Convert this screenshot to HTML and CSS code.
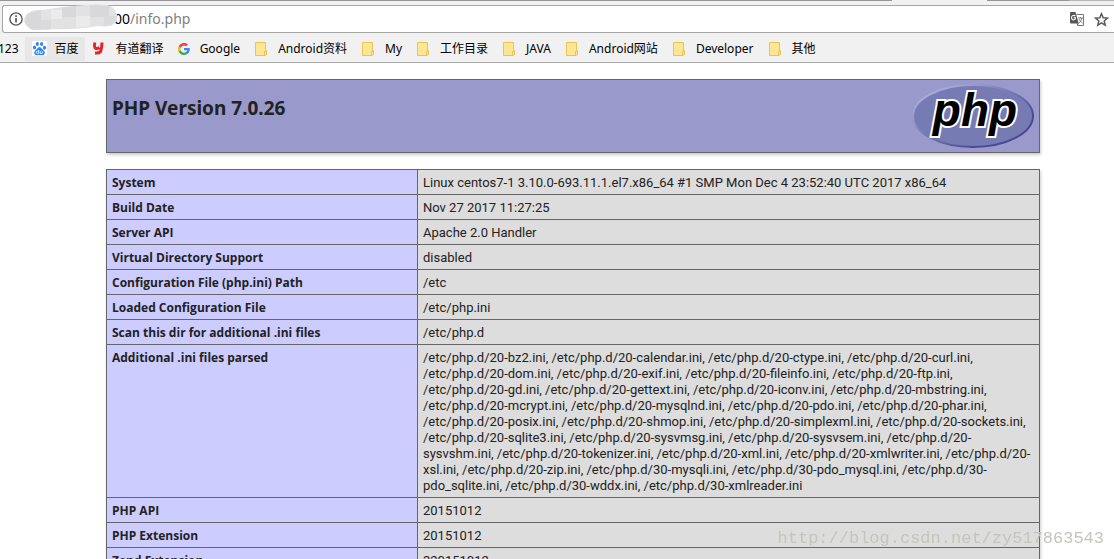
FILE: index.html
```html
<!DOCTYPE html>
<html lang="zh-CN">
<head>
<meta charset="utf-8">
<title>phpinfo()</title>
<link rel="stylesheet" href="styles.css">
</head>
<body>
<svg class="defs" width="0" height="0" aria-hidden="true">
  <symbol id="folder" viewBox="0 0 12 14">
    <path d="M.5.5h10v8h1v4h-1v1H.5z" fill="#ffe694" stroke="#e9c54e"/>
    <path d="M9.5 13V9.5h2v3.5" fill="#ffe694" stroke="#e9c54e"/>
  </symbol>
</svg>
<header class="browser">
  <div class="tab-strip"><span class="tab-active"></span><span class="tab-edge"></span></div>
  <div class="address">
    <svg class="info" viewBox="0 0 14 14" aria-hidden="true"><circle cx="7" cy="7" r="6.1" fill="none" stroke="#5a5a5a" stroke-width="1.4"/><path d="M6.2 6h1.7v4.5H6.2zM6.2 3.2h1.7v1.7H6.2z" fill="#5a5a5a"/></svg>
    <label class="host" for="url">00</label>
    <input class="url" id="url" type="text" value="/info.php">
    <svg class="smudge" viewBox="0 0 94 27" aria-hidden="true">
      <path d="M2 11Q8 5 18 6Q40 2 62 1Q82-1 88 3Q96 10 92 18Q88 24 75 22Q48 26 30 25Q12 28 5 24Q-3 18 2 11z" fill="#e2e2e2"/>
      <path d="M3 10l14-4v19l-9 1-7-7zM38 4l14-2v11H38zM66 1l19 1v11H66z" fill="#d8d8da"/>
      <path d="M27 6h11v9H27zM52 12h14v10l-14 1z" fill="#ebebeb"/>
      <path d="M17 16h10v9H17zM80 12h12l-3 8-9 2z" fill="#dadadc"/>
    </svg>
    <button class="icon-button" type="button" aria-label="翻译此页">
      <svg width="14" height="14" viewBox="0 0 14 14"><path d="M6.5 2.5h7v11h-6" fill="#fff" stroke="#777"/><path d="M0 1q0-1 1-1h4.5l3.2 11.5H1q-1 0-1-1z" fill="#555"/><path d="M5.3 4.2Q4.3 3 3 3.5Q1.5 4 1.5 5.7Q1.7 7.9 3.5 8Q5.4 7.8 5.5 5.8H3.6" fill="none" stroke="#fff" stroke-width="1.1"/><path d="M8 6h5M10.5 5v1M12 6q-1 3.500-3 5M9 7q1 2.500 3.500 4" fill="none" stroke="#777" stroke-width=".9"/><path d="M6.500 11.500H9L7.500 13.500z" fill="#555"/></svg>
    </button>
    <button class="icon-button" type="button" aria-label="收藏">
      <svg width="15" height="15" viewBox="0 0 15 15"><path d="M7.500 1.700l1.700 4 4.300.4-3.300 2.800 1 4.200-3.700-2.200-3.700 2.200 1-4.200L1.500 6.100l4.300-.4z" fill="#fff" stroke="#5a5a5a" stroke-width="1.500"/></svg>
    </button>
  </div>
  <nav class="bookmarks">
    <a class="mark first" href="#">123</a>
    <a class="mark hovered" href="#"><svg width="15" height="15" viewBox="0 0 15 15"><rect width="15" height="15" fill="#fff"/><g fill="#2f86f6"><ellipse cx="5.300" cy="3" rx="1.600" ry="2.100"/><ellipse cx="9.600" cy="3" rx="1.600" ry="2.100"/><ellipse cx="2.500" cy="6.600" rx="1.600" ry="2"/><ellipse cx="12.500" cy="6.800" rx="1.600" ry="2"/><path d="M7.500 6q1.300 0 2.200 1.600 1 1.200 2.300 2.200 1.500 1.600.4 3.500-1 1.400-2.700.9-2.200-.4-4.400 0-1.700.5-2.700-.9-1.100-1.900.4-3.500 1.300-1 2.300-2.200Q6.200 6 7.500 6z"/></g><path d="M6.700 9v3.500H5.200q-1-.2-1-1.200t1-1.100h1.500M8.200 10v2.500h2V10" fill="none" stroke="#fff" stroke-width=".8"/></svg>百度</a>
    <a class="mark youdao" href="#"><svg width="13" height="15" viewBox="0 0 13 15"><path d="M2.800 1.500Q2 6.500 3.500 7.300Q5.500 8 7.500 6.500M10 1.500Q9.700 8 8.500 10.500Q7 12.500 3 12" fill="none" stroke="#e8222b" stroke-width="3"/></svg>有道翻译</a>
    <a class="mark google" href="#"><svg width="12" height="12" viewBox="0 0 48 48"><path fill="#4285f4" d="M47 24.500c0-1.600-.2-3.200-.4-4.700H24v9h13c-.6 3-2.200 5.500-4.700 7.200v6h7.600C44.400 37.900 47 31.700 47 24.500z"/><path fill="#34a853" d="M24 48c6.400 0 11.800-2.100 15.800-5.800l-7.600-6c-2.200 1.500-4.900 2.300-8.200 2.300-6.300 0-11.600-4.200-13.500-9.900H2.700v6.200C6.700 42.700 14.700 48 24 48z"/><path fill="#fbbc05" d="M10.500 28.600a14 14 0 010-9.200v-6.200H2.700a24 24 0 000 21.600z"/><path fill="#ea4335" d="M24 9.500c3.500 0 6.700 1.200 9.200 3.600l6.800-6.800C35.900 2.400 30.400 0 24 0 14.700 0 6.700 5.300 2.700 13.200l7.800 6.200C12.400 13.700 17.700 9.500 24 9.500z"/></svg>Google</a>
    <a class="mark" href="#"><svg width="12" height="14"><use href="#folder"/></svg>Android资料</a>
    <a class="mark" href="#"><svg width="12" height="14"><use href="#folder"/></svg>My</a>
    <a class="mark" href="#"><svg width="12" height="14"><use href="#folder"/></svg>工作目录</a>
    <a class="mark" href="#"><svg width="12" height="14"><use href="#folder"/></svg>JAVA</a>
    <a class="mark" href="#"><svg width="12" height="14"><use href="#folder"/></svg>Android网站</a>
    <a class="mark" href="#"><svg width="12" height="14"><use href="#folder"/></svg>Developer</a>
    <a class="mark" href="#"><svg width="12" height="14"><use href="#folder"/></svg>其他</a>
  </nav>
</header>
<main class="page">
  <div class="banner">
    <h1 class="title">PHP Version 7.0.26</h1>
    <svg class="logo" width="122" height="65" viewBox="0 0 122 65" role="img" aria-label="PHP logo">
      <defs>
        <linearGradient id="rim" x1="0" y1="0" x2="1" y2="1"><stop offset=".15" stop-color="#aaaad8"/><stop offset=".48" stop-color="#7477b0"/><stop offset=".75" stop-color="#484893"/></linearGradient>
      </defs>
      <ellipse cx="61" cy="32" rx="60" ry="31" fill="#777bb3" stroke="url(#rim)" stroke-width="2"/>
      <text class="logo-text" x="63" y="42" text-anchor="middle">php</text>
    </svg>
  </div>
  <table class="info-table">
    <tbody>
      <tr><th scope="row">System</th><td>Linux centos7-1 3.10.0-693.11.1.el7.x86_64 #1 SMP Mon Dec 4 23:52:40 UTC 2017 x86_64</td></tr>
      <tr><th scope="row">Build Date</th><td>Nov 27 2017 11:27:25</td></tr>
      <tr><th scope="row">Server API</th><td>Apache 2.0 Handler</td></tr>
      <tr><th scope="row">Virtual Directory Support</th><td>disabled</td></tr>
      <tr><th scope="row">Configuration File (php.ini) Path</th><td>/etc</td></tr>
      <tr><th scope="row">Loaded Configuration File</th><td>/etc/php.ini</td></tr>
      <tr><th scope="row">Scan this dir for additional .ini files</th><td>/etc/php.d</td></tr>
      <tr><th scope="row">Additional .ini files parsed</th><td>/etc/php.d/20-bz2.ini, /etc/php.d/20-calendar.ini, /etc/php.d/20-ctype.ini, /etc/php.d/20-curl.ini,<br>/etc/php.d/20-dom.ini, /etc/php.d/20-exif.ini, /etc/php.d/20-fileinfo.ini, /etc/php.d/20-ftp.ini,<br>/etc/php.d/20-gd.ini, /etc/php.d/20-gettext.ini, /etc/php.d/20-iconv.ini, /etc/php.d/20-mbstring.ini,<br>/etc/php.d/20-mcrypt.ini, /etc/php.d/20-mysqlnd.ini, /etc/php.d/20-pdo.ini, /etc/php.d/20-phar.ini,<br>/etc/php.d/20-posix.ini, /etc/php.d/20-shmop.ini, /etc/php.d/20-simplexml.ini, /etc/php.d/20-sockets.ini,<br>/etc/php.d/20-sqlite3.ini, /etc/php.d/20-sysvmsg.ini, /etc/php.d/20-sysvsem.ini, /etc/php.d/20-<br>sysvshm.ini, /etc/php.d/20-tokenizer.ini, /etc/php.d/20-xml.ini, /etc/php.d/20-xmlwriter.ini, /etc/php.d/20-<br>xsl.ini, /etc/php.d/20-zip.ini, /etc/php.d/30-mysqli.ini, /etc/php.d/30-pdo_mysql.ini, /etc/php.d/30-<br>pdo_sqlite.ini, /etc/php.d/30-wddx.ini, /etc/php.d/30-xmlreader.ini</td></tr>
      <tr><th scope="row">PHP API</th><td>20151012</td></tr>
      <tr><th scope="row">PHP Extension</th><td>20151012</td></tr>
      <tr><th scope="row">Zend Extension</th><td>320151012</td></tr>
    </tbody>
  </table>
</main>
<div class="watermark">http://blog.csdn.net/zy517863543</div>
</body>
</html>
```

FILE: styles.css
```css
* { box-sizing: border-box; }
body {
  margin: 0;
  height: 100vh;
  overflow: hidden;
  background: #fff;
  color: #222;
  font: 12px/16px "Noto Sans", "Noto Sans CJK SC", sans-serif;
}
.defs { position: absolute; }
.browser { background: #f1f1f1; border-bottom: 1px solid #aaa; }
.tab-strip {
  display: flex;
  justify-content: flex-end;
  height: 1px;
  margin-bottom: 4px;
  background: #979499;
}
.tab-active { width: 95px; margin-right: 82px; background: #f1f1f1; }
.tab-edge { width: 45px; background: #b5b3b5; }
.address {
  position: relative;
  display: flex;
  align-items: center;
  height: 28px;
  margin-left: 2px;
  padding: 0 5px 0 6px;
  background: #fff;
  border: 1px solid #a5a5a5;
  border-right: 0;
  border-radius: 3px 0 0 3px;
  font-size: 14px;
  line-height: 20px;
}
.info { width: 14px; height: 14px; margin-right: 91px; }
.host { color: #000; }
.url {
  flex: 1;
  min-width: 0;
  padding: 0;
  border: 0;
  outline: 0;
  background: none;
  color: #808080;
  font: inherit;
}
.smudge { position: absolute; left: 21px; top: -2px; width: 94px; height: 27px; }
.icon-button {
  display: flex;
  margin-left: 10px;
  padding: 0;
  border: 0;
  background: none;
}
.bookmarks { display: flex; align-items: center; height: 29px; padding-top: 2px; }
.mark {
  display: flex;
  align-items: center;
  gap: 11px;
  height: 24px;
  margin-right: 15px;
  color: #000;
  text-decoration: none;
  white-space: nowrap;
}
.mark.first { margin: 0 6px 0 -2px; }
.mark.hovered { gap: 8px; padding: 0 6px 0 7px; margin-right: 7px; background: #e7e7e7; }
.mark.youdao { margin-right: 14px; }
.mark.google { gap: 10px; }
.page { padding: 16px 74px 0 106px; }
.banner {
  display: flex;
  justify-content: space-between;
  max-width: 934px;
  height: 74px;
  margin: 0 0 16px;
  padding: 4px 5px;
  background: #9999cc;
  border: 1px solid #666;
  box-shadow: 1px 2px 3px #ccc;
}
.title { margin: 12px 0 0; font-size: 19px; line-height: 24px; font-weight: 700; }
.logo-text {
  font: italic 700 46px "Liberation Sans", sans-serif;
  fill: #000;
  stroke: #fff;
  stroke-width: 4px;
  paint-order: stroke;
}
.info-table {
  width: 100%;
  max-width: 934px;
  border-collapse: collapse;
  box-shadow: 1px 2px 3px #ccc;
}
.info-table th, .info-table td {
  padding: 5px 5px 3px;
  border: 1px solid #666;
  text-align: left;
  vertical-align: top;
}
.info-table th {
  width: 311px;
  background: #ccccff;
  font-family: "Open Sans", sans-serif;
  font-weight: 700;
}
.info-table td { background: #ddd; font-family: Roboto, sans-serif; font-size: 13px; }
.watermark {
  position: fixed;
  right: 10px;
  bottom: 10px;
  color: #c5c5bd;
  font: 17px/20px "Liberation Mono", monospace;
  pointer-events: none;
}
```
